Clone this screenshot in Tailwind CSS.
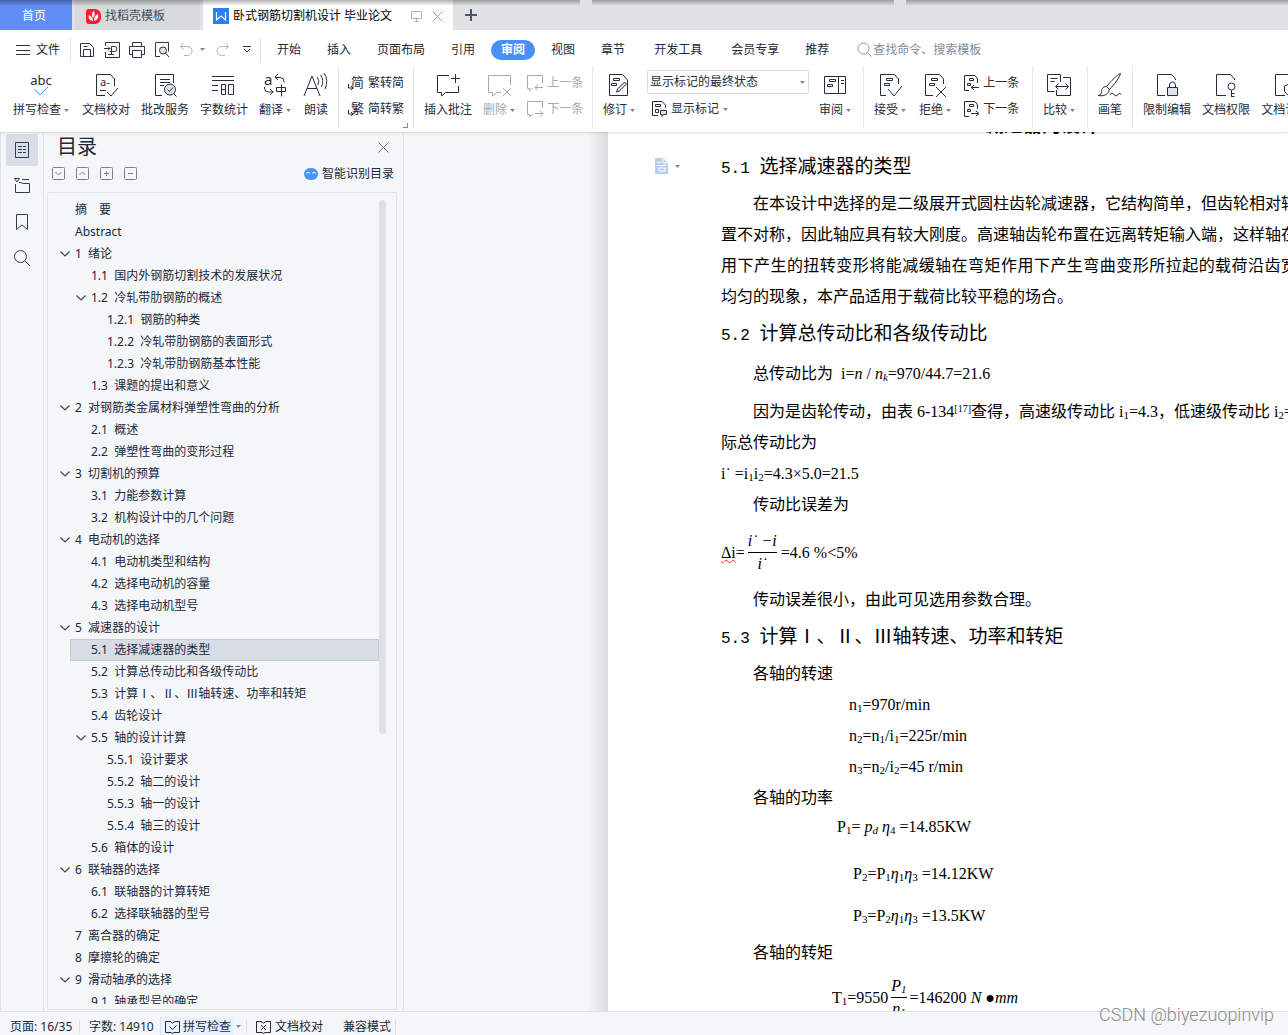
<!DOCTYPE html>
<html lang="zh-CN">
<head>
<meta charset="utf-8">
<title>卧式钢筋切割机设计 毕业论文</title>
<script src="https://cdn.jsdelivr.net/npm/@tailwindcss/browser@4"></script>
</head>
<body class="h-screen overflow-hidden flex flex-col bg-[#f5f6f8] text-xs text-[#20283a] font-['Noto_Sans','Noto_Sans_CJK_SC',sans-serif] whitespace-nowrap">
<svg class="hidden">
  <symbol id="down" viewBox="0 0 5 3"><path d="M0 0h5L2.5 3z" fill="#7d879a"/></symbol>
</svg>

<header class="relative z-10 shrink-0 bg-white shadow-sm">
  <!-- document tabs -->
  <nav class="relative flex h-[30px] bg-[#e1e2e6]">
    <a href="#" class="w-[72px] mr-[3px] flex items-center justify-center pr-1 pt-0.5 bg-[#618df6] text-white">首页</a>
    <a href="#" class="w-[125px] mr-[3px] flex items-center gap-1 pl-[11px] pt-0.5 bg-[#d8d9db] text-[#454d5c]">
      <svg class="size-[15px]" viewBox="0 0 15 15"><path d="M3 0h6a6 6 0 0 1 6 6v3a6 6 0 0 1-6 6H3a3 3 0 0 1-3-3V3a3 3 0 0 1 3-3z" fill="#f8202e"/><path d="M7 12C3 11 2 9 3 6c2 1 4 3 4 6zM7 9C5 6 6 3 8 2c1 2 1 5-1 7zM8 12c0-3 1-6 4-7 1 4-1 6-4 7z" fill="#fff"/></svg>
      找稻壳模板</a>
    <a href="#" class="w-[250px] flex items-center pl-[10px] pt-0.5 bg-white text-black">
      <svg class="size-4 mr-1" viewBox="0 0 16 16"><path fill="#2f7df0" d="M0 0h16v16H0z"/><path d="M3.500 4v8l4.500-4 4.500 4V4" fill="none" stroke="#fff" stroke-width="1.200"/></svg>
      卧式钢筋切割机设计 毕业论文
      <svg class="w-3 h-3 ml-auto mr-[9px]" viewBox="0 0 12 12" fill="none" stroke="#aab1c2"><path d="M.5 1.500h10v7H.5zM5.500 8.500v3M3 11.500h5"/></svg>
      <svg class="size-[11px] mr-[10px]" viewBox="0 0 11 11" stroke="#99a1b5"><path d="M.5.5l10 10M10.500.5l-10 10"/></svg>
    </a>
    <button class="w-9 flex items-center justify-center" aria-label="新建"><svg class="size-3" viewBox="0 0 12 12" stroke="#4a556d" stroke-width="2"><path d="M0 6h12M6 0v12"/></svg></button>
    <div class="absolute inset-x-0 top-0 flex gap-3">
      <i class="w-[580px] h-1.5 bg-linear-to-b from-black/30 to-transparent"></i>
      <i class="w-[302px] h-1.5 bg-linear-to-b from-black/30 to-transparent"></i>
      <i class="flex-1 h-1.5 bg-linear-to-b from-black/30 to-transparent"></i>
    </div>
  </nav>

  <!-- menu -->
  <div class="flex items-center h-9 pl-4 pt-[3px]">
    <button class="flex items-center gap-1.5"><svg class="w-3.5 h-3" viewBox="0 0 14 12" stroke="#2c3548"><path d="M0 1.500h14M0 6.500h14M0 10.500h14"/></svg>文件</button>
    <i class="w-px h-6 ml-[10px] mr-2 bg-[#dfe1e6]"></i>
    <div class="flex items-center gap-[9px] w-[181px] text-[#2c3548]">
      <svg class="size-4" viewBox="0 0 16 16" fill="none" stroke="currentColor"><path d="M1.500 14.500v-13h9l4 4v9zM4.500 14V7.500h7V14M4.500 4.500h4"/></svg>
      <svg class="size-4" viewBox="0 0 16 16" fill="none" stroke="currentColor"><path d="M1.500 4V.5h14v15h-14V10M0 6.500h6M4 4.500l2 2-2 2M7.500 12V4.500h3a2.500 2.500 0 0 1 0 5h-5M4 12.500h6"/></svg>
      <svg class="size-4" viewBox="0 0 16 16" fill="none" stroke="currentColor"><path d="M3.500 4.500v-4h9v4M3.500 12.500h-3v-8h15v8h-3M3.500 8.500h9v7h-9z"/></svg>
      <svg class="size-4" viewBox="0 0 16 16" fill="none" stroke="currentColor"><path d="M6 14.500H1.500V.5h13v9"/><circle cx="9" cy="8.500" r="3.500" fill="#dfe2e8"/><path d="M11.500 11l3.500 4"/></svg>
      <svg class="size-4 -mr-1" viewBox="0 0 16 16" fill="none" stroke="#a9aeba"><path d="M4.500 1L1.500 4.500l3 3M1.500 4.500h7a4.500 4.500 0 0 1 0 9H5"/></svg>
      <svg class="w-[5px] h-[3px]"><use href="#down"/></svg>
      <svg class="size-4" viewBox="0 0 16 16" fill="none" stroke="#b4b8c2"><path d="M11.500 1l3 3.500-3 3M14.500 4.500h-7a4.500 4.500 0 0 0 0 9H11"/></svg>
      <svg class="size-2 ml-1" viewBox="0 0 8 8" fill="none" stroke="currentColor"><path d="M0 .5h8M1 3l3 3 3-3"/></svg>
    </div>
    <i class="w-px h-6 mr-4 bg-[#dfe1e6]"></i>
    <nav class="flex items-center gap-[26px]">
      <a href="#">开始</a><a href="#">插入</a><a href="#">页面布局</a><a href="#">引用</a>
      <a href="#" class="-mx-[10px] px-[10px] h-5 leading-5 rounded-full bg-[#4a90f4] text-white font-bold">审阅</a>
      <a href="#">视图</a><a href="#">章节</a><a href="#" class="ml-[3px]">开发工具</a><a href="#" class="ml-[3px]">会员专享</a><a href="#">推荐</a>
    </nav>
    <label class="flex items-center gap-px ml-7">
      <svg class="size-[15px]" viewBox="0 0 15 15" fill="none" stroke="#8d95aa"><circle cx="6.500" cy="6.500" r="5.500"/><path d="M10.500 10.500l4 4"/></svg>
      <input class="w-40 h-5 outline-none placeholder:text-[#838a9b]" placeholder="查找命令、搜索模板" aria-label="查找命令">
    </label>
  </div>

  <!-- ribbon -->
  <div class="flex h-[66px] pb-1 overflow-hidden text-[#232c40] [&>div]:shrink-0 [&_button]:shrink-0 [&_svg]:shrink-0 [&_svg]:overflow-visible">
    <div class="flex gap-[11px] pl-[13px] pr-[10px] pt-1.5">
      <button class="flex flex-col items-center gap-0.5 pr-0.5"><svg class="size-7" viewBox="0 0 28 28" fill="none" stroke="#4a90f4"><text x="14" y="13" text-anchor="middle" font-size="13" fill="#232c40" stroke="none">abc</text><path d="M7.500 17l5.500 6 8-8"/></svg><span class="flex items-center gap-[3px]">拼写检查<svg class="w-[5px] h-[3px]"><use href="#down"/></svg></span></button>
      <button class="flex flex-col items-center gap-0.5"><svg class="size-7" viewBox="0 0 28 28" fill="none" stroke="currentColor"><path d="M22.500 14V7l-4-4.500h-14v21H13M8 18.500h6M15 20l4 4 7-8"/><text x="8" y="14" font-size="11" fill="currentColor" stroke="none">a-</text></svg>文档校对</button>
      <button class="flex flex-col items-center gap-0.5"><svg class="size-7" viewBox="0 0 28 28" fill="none" stroke="currentColor"><path d="M11 23.500H4.500v-21h18V11M9 7.500h10M9 10.500h10M9 13.500h4"/><circle cx="19" cy="17.500" r="5.500" fill="#dfe2e8"/><path d="M16.500 17.500l2 2 3.500-4M22.500 21.500l3 3"/></svg>批改服务</button>
      <button class="flex flex-col items-center gap-0.5"><svg class="size-7" viewBox="0 0 28 28" fill="none" stroke="currentColor"><path d="M2 4.500h22M2 8.500h22M2 13.500h6M2 18.500h6M11.500 12.500h4v10h-4zM11.500 17.500h4M18.500 12.500h5v10h-5z"/></svg>字数统计</button>
      <button class="flex flex-col items-center gap-0.5 pr-0.5"><svg class="size-7" viewBox="0 0 28 28" fill="none" stroke="currentColor"><text x="3" y="13" font-size="15" fill="currentColor" stroke="none">a</text><path d="M17 2l-3 3 3 3M14 5.500h5a4 4 0 0 1 4 4v1M3.500 15v1a4 4 0 0 0 4 4h5M9 17l3 3-3 3M15.500 15.500h9v4h-9zM20.500 12.500v12"/></svg><span class="flex items-center gap-[3px]">翻译<svg class="w-[5px] h-[3px]"><use href="#down"/></svg></span></button>
      <button class="flex flex-col items-center gap-0.5"><svg class="size-7 -mx-0.5" viewBox="0 0 28 28" fill="none" stroke="currentColor"><path d="M2 24L10 4l8 20M5 16.500h10M15 5q3 3 1 8M18.500 3q4 5 1 12M22 1q5 7 1 16"/></svg>朗读</button>
    </div>
    <div class="relative flex flex-col gap-[10px] w-[75px] pl-[9px] pt-[9px] border-l border-[#e8eaee]">
      <button class="flex items-center gap-1"><svg class="size-4" viewBox="0 0 16 16" fill="none" stroke="currentColor"><text x="3" y="12" font-size="13" fill="currentColor" stroke="none">简</text><path d="M.5 9v4h4M3 11l2 2-2 2"/></svg>繁转简</button>
      <button class="flex items-center gap-1"><svg class="size-4" viewBox="0 0 16 16" fill="none" stroke="currentColor"><text x="3" y="12" font-size="13" fill="currentColor" stroke="none">繁</text><path d="M.5 9v4h4M3 11l2 2-2 2"/></svg>简转繁</button>
      <i class="absolute right-[5px] bottom-0 size-[5px] border-r border-b border-[#7d879a]"></i>
    </div>
    <div class="flex gap-[11px] w-[179px] pl-[10px] pt-1.5 border-l border-[#e8eaee]">
      <button class="flex flex-col items-center gap-0.5"><svg class="size-7" viewBox="0 0 28 28" fill="none" stroke="currentColor"><path d="M15 3.500H3.500v17h4V24l4-3.500h13V14M17 6.500h9M21.500 2v9"/></svg>插入批注</button>
      <button class="flex flex-col items-center gap-0.5 pr-0.5 text-[#a4a8b0]"><svg class="size-7" viewBox="0 0 28 28" fill="none" stroke="currentColor"><path d="M16 20.500h-4.500L7.500 24v-3.500h-4v-17h22V13M18 16l8 8M26 16l-8 8"/></svg><span class="flex items-center gap-[3px]">删除<svg class="w-[5px] h-[3px]"><use href="#down"/></svg></span></button>
      <div class="flex flex-col gap-[10px] pt-[3px] -ml-px text-[#a4a8b0]">
        <button class="flex items-center gap-1"><svg class="size-4" viewBox="0 0 16 16" fill="none" stroke="currentColor"><path d="M15.500 8V.5H.5v13h2v2l3-2M8 12.500h8M11 9.500l-3 3 3 3"/></svg>上一条</button>
        <button class="flex items-center gap-1"><svg class="size-4" viewBox="0 0 16 16" fill="none" stroke="currentColor"><path d="M15.500 7V.5H.5v13h2v2l3-2M8 12.500h8M13 9.500l3 3-3 3"/></svg>下一条</button>
      </div>
    </div>
    <div class="flex gap-[10px] w-[271px] pl-[10px] pt-1.5 border-l border-[#e8eaee]">
      <button class="flex flex-col items-center gap-0.5 pr-0.5"><svg class="size-7" viewBox="0 0 28 28" fill="none" stroke="currentColor"><path d="M22.500 8l-5-5.500h-13v21h18zM8.500 6.500h6v2h-6zM6.500 11.500h5v2h-5z"/><path d="M11.500 20l1-3 7-7 2 2-7 7z" fill="#dfe2e8"/></svg><span class="flex items-center gap-[3px]">修订<svg class="w-[5px] h-[3px]"><use href="#down"/></svg></span></button>
      <div class="flex flex-col gap-[7px] -mt-0.5">
        <div class="relative w-[162px] flex items-center">
          <select class="appearance-none w-full h-6 pl-0.5 rounded-xs border border-[#dadde3] bg-white" aria-label="显示方式"><option>显示标记的最终状态</option></select>
          <svg class="absolute right-1 w-[5px] h-[3px]"><use href="#down"/></svg>
        </div>
        <button class="flex items-center gap-1 pl-1"><svg class="size-4" viewBox="0 0 16 16" fill="none" stroke="currentColor"><path d="M14.500 7V4L11 .5H1.500v14H7M4.500 3.500h5v2h-5zM4.500 8.500h3v3h-3z"/><path d="M9.500 9.500h6v4h-3l-1.500 2v-2H9.500z" fill="#dfe2e8"/></svg><span class="flex items-center gap-1">显示标记<svg class="w-[5px] h-[3px]"><use href="#down"/></svg></span></button>
      </div>
      <button class="flex flex-col items-center gap-0.5"><svg class="size-7" viewBox="0 0 28 28" fill="none" stroke="currentColor"><path d="M3.500 4.500h21v17h-21zM17.500 4.500v17M20 8.500h3M20 11.500h3M8.500 7.500h6v2h-6zM6.500 12.500h5v2h-5z"/></svg><span class="flex items-center gap-[3px]">审阅<svg class="w-[5px] h-[3px]"><use href="#down"/></svg></span></button>
    </div>
    <div class="flex gap-[11px] w-[169px] pl-[10px] pt-1.5 border-l border-[#e8eaee]">
      <button class="flex flex-col items-center gap-0.5 pr-0.5"><svg class="size-7" viewBox="0 0 28 28" fill="none" stroke="currentColor"><path d="M22.500 12V7l-4-4.500h-14v21H10M10.500 6.500h6v2h-6zM8.500 11.500h5v2h-5zM12 17l6 7 8-10"/></svg><span class="flex items-center gap-[3px]">接受<svg class="w-[5px] h-[3px]"><use href="#down"/></svg></span></button>
      <button class="flex flex-col items-center gap-0.5 pr-0.5"><svg class="size-7" viewBox="0 0 28 28" fill="none" stroke="currentColor"><path d="M22.500 12V7l-4-4.500h-14v21H12M10.500 6.500h6v2h-6zM8.500 11.500h5v2h-5zM15 15l10 10M25 15L15 25"/></svg><span class="flex items-center gap-[3px]">拒绝<svg class="w-[5px] h-[3px]"><use href="#down"/></svg></span></button>
      <div class="flex flex-col gap-[10px] pt-[3px]">
        <button class="flex items-center gap-[3px]"><svg class="size-4" viewBox="0 0 16 16" fill="none" stroke="currentColor"><path d="M13.500 8V4L11 .5H.5v15H5M5.500 3.500h4v2h-4zM3.500 8.500h3v2h-3zM8 12.500h7M10 10l-3 2.500 3 2.500"/></svg>上一条</button>
        <button class="flex items-center gap-[3px]"><svg class="size-4" viewBox="0 0 16 16" fill="none" stroke="currentColor"><path d="M13.500 8V4L11 .5H.5v15H5M5.500 3.500h4v2h-4zM3.500 8.500h3v2h-3zM7 12.500h7M12 10l3 2.500-3 2.500"/></svg>下一条</button>
      </div>
    </div>
    <div class="w-[55px] pl-[10px] pt-1.5 border-l border-[#e8eaee]">
      <button class="flex flex-col items-center gap-0.5"><svg class="size-7" viewBox="0 0 28 28" fill="none" stroke="currentColor"><path d="M15.500 10V2.500h-13v17h7M5.500 6.500h7M5.500 9.500h4M18 5.500h7.500v18h-14V18M11 14.500h12M13.500 11.500l-3 3 3 3M20.500 11.500l3 3-3 3"/></svg><span class="flex items-center gap-[3px]">比较<svg class="w-[5px] h-[3px]"><use href="#down"/></svg></span></button>
    </div>
    <div class="w-[45px] pl-[10px] pt-1.5 border-l border-[#e8eaee]">
      <button class="flex flex-col items-center gap-0.5"><svg class="size-7 -mx-0.5" viewBox="0 0 28 28" fill="none" stroke="currentColor"><path d="M24.500 1.500c-3 1-10 8-14 13l3 3c5-5 10-12 11-16zM10.500 14.500c-4 0-5 3-5 6q0 3-3.500 3c6 1 11-1 11-6M14 22.500q2-3 4 0t4 0 3 0"/></svg>画笔</button>
    </div>
    <div class="flex gap-[11px] pl-[10px] pt-1.5 border-l border-[#e8eaee]">
      <button class="flex flex-col items-center gap-0.5"><svg class="size-7" viewBox="0 0 28 28" fill="none" stroke="currentColor"><path d="M22.500 8V7l-4-4.500h-14v21H12M16.500 16v-3a3 3 0 0 1 6 0v3"/><path d="M14.500 15.500h10v8h-10z" fill="#dfe2e8"/></svg>限制编辑</button>
      <button class="flex flex-col items-center gap-0.5"><svg class="size-7" viewBox="0 0 28 28" fill="none" stroke="currentColor"><path d="M22.500 8V7l-4-4.500h-14v21H14M19.500 18v7M19.500 21.500h3M19.500 24.500h3"/><circle cx="19.500" cy="14.500" r="3.500"/></svg>文档权限</button>
      <button class="flex flex-col items-center gap-0.5"><svg class="size-7" viewBox="0 0 28 28" fill="none" stroke="currentColor"><path d="M22.500 8V7l-4-4.500h-14v21H14M13.500 14l5-2 5 2v5q-1 3-5 5-4-2-5-5z"/></svg>文档认证</button>
    </div>
  </div>
</header>

<main class="flex flex-1 min-h-0">
  <!-- tool strip -->
  <aside class="shrink-0 w-11 pt-0.5 flex flex-col items-center gap-1 border-x border-[#e0e2e8] text-[#2f3a55]">
    <button class="size-8 flex items-center justify-center rounded-xs bg-[#d9dde5]" aria-label="目录"><svg class="size-4" viewBox="0 0 16 16" fill="none" stroke="currentColor"><path d="M1.500.5h13v15h-13zM4 4.500h4M9 4.500h3M4 7.500h4M9 7.500h3M4 10.500h4M9 10.500h3"/></svg></button>
    <button class="size-8 flex items-center justify-center" aria-label="章节"><svg class="size-4" viewBox="0 0 16 16" fill="none" stroke="currentColor"><path d="M.5.5h5L3 4zM8 1.500h7M1.500 6v8.500h14v-9H9l-2-1H5"/></svg></button>
    <button class="size-8 flex items-center justify-center" aria-label="书签"><svg class="size-4" viewBox="0 0 16 16" fill="none" stroke="currentColor"><path d="M2.500.5h11v15L8 11l-5.500 4.500z"/></svg></button>
    <button class="size-8 flex items-center justify-center" aria-label="查找"><svg class="size-4" viewBox="0 0 16 16" fill="none" stroke="currentColor"><circle cx="6.500" cy="6.500" r="6"/><path d="M11 11l5 5"/></svg></button>
  </aside>

  <!-- outline panel -->
  <section class="shrink-0 w-[360px] pl-[3px] pr-1.5 flex flex-col border-r border-[#e0e2e8]">
    <div class="flex items-center justify-between h-[30px] pl-[10px] pr-2">
      <h2 class="text-xl">目录</h2>
      <button aria-label="关闭"><svg class="size-[11px]" viewBox="0 0 11 11" stroke="#6d7486"><path d="M.5.5l10 10M10.500.5l-10 10"/></svg></button>
    </div>
    <div class="flex items-center gap-[11px] h-[30px] pl-[5px] pr-[3px] pb-[7px]">
      <button aria-label="展开"><svg class="block size-[13px]" viewBox="0 0 13 13" fill="none" stroke="#7b8190"><rect x=".5" y=".5" width="12" height="12" rx="1"/><path d="M3.500 5l3 3 3-3"/></svg></button>
      <button aria-label="收起"><svg class="block size-[13px]" viewBox="0 0 13 13" fill="none" stroke="#7b8190"><rect x=".5" y=".5" width="12" height="12" rx="1"/><path d="M3.500 8l3-3 3 3"/></svg></button>
      <button aria-label="增加级别"><svg class="block size-[13px]" viewBox="0 0 13 13" fill="none" stroke="#7b8190"><rect x=".5" y=".5" width="12" height="12" rx="1"/><path d="M4 6.500h5M6.500 4v5"/></svg></button>
      <button aria-label="减少级别"><svg class="block size-[13px]" viewBox="0 0 13 13" fill="none" stroke="#7b8190"><rect x=".5" y=".5" width="12" height="12" rx="1"/><path d="M4 6.500h5"/></svg></button>
      <button class="flex items-center gap-1 ml-auto"><svg class="w-3.5 h-3" viewBox="0 0 14 12"><rect width="14" height="12" rx="6" fill="#4796f5"/><path d="M2.500 5.500q1.500-2.500 3 0M8.500 5.500q1.500-2.500 3 0" fill="none" stroke="#fff" stroke-width="1.200"/></svg>智能识别目录</button>
    </div>
    <div class="flex-1 min-h-0 flex mb-px pt-1.5 pb-[5px] pr-2.5 border border-[#e0e3e9] rounded-xs">
      <ul id="outline" class="flex-1 ml-2 overflow-hidden"></ul>
      <i class="w-[7px] h-[534px] mt-px rounded-full bg-[#dee0e3]"></i>
    </div>
  </section>

  <!-- document canvas -->
  <div class="flex-1 min-w-0 flex overflow-hidden">
    <div class="shrink-0 w-[204px] bg-linear-to-r from-[#f5f6f8] from-90% to-[#dcdddf]"></div>
    <article class="flex-1 min-w-0 flex pl-[47px] overflow-hidden bg-white text-black">
      <button class="shrink-0 self-start flex items-center gap-[7px] w-[66px] mt-[26px]" aria-label="段落"><svg class="w-[13px] h-4" viewBox="0 0 13 16"><path d="M0 0h8l5 5v11H0z" fill="#b9cdec"/><path d="M8 0v5h5M2 4.500h4M2 7.500h9M4 10h6v3H4z" fill="none" stroke="#fff"/></svg><svg class="w-[5px] h-[3px]"><use href="#down"/></svg></button>
      <div class="shrink-0 w-[576px] text-base leading-[31px] font-['Liberation_Serif','Noto_Sans_CJK_SC',serif] [&_h3]:text-[19px] [&_h3]:leading-[37px] [&_h3]:mt-[3px] [&_h3]:mb-[3px] [&_h3>span]:font-['Liberation_Mono',monospace] [&_h3>span]:text-base [&_p]:h-[31px] [&_sub]:text-[11px] [&_sub]:leading-none [&_sub]:bottom-[-2px]">
        <h2 class="-mt-[22px] mb-1.5 h-8 pl-[264px] text-[19px] leading-8 font-bold">减速器的设计</h2>
        <h3><span class="whitespace-pre">5.1 </span>选择减速器的类型</h3>
        <p class="pl-8 [text-align-last:justify]">在本设计中选择的是二级展开式圆柱齿轮减速器，它结构简单，但齿轮相对轴</p>
        <p class="[text-align-last:justify]">置不对称，因此轴应具有较大刚度。高速轴齿轮布置在远离转矩输入端，这样轴在</p>
        <p class="[text-align-last:justify]">用下产生的扭转变形将能减缓轴在弯矩作用下产生弯曲变形所拉起的载荷沿齿宽</p>
        <p>均匀的现象，本产品适用于载荷比较平稳的场合。</p>
        <h3><span class="whitespace-pre">5.2 </span>计算总传动比和各级传动比</h3>
        <p class="pl-8 mt-1.5 whitespace-pre">总传动比为  i=<i>n</i> / <i>n<sub>k</sub></i>=970/44.7=21.6</p>
        <p class="pl-8 mt-[7px]">因为是齿轮传动，由表 6-134<sup class="text-[10px] leading-none">[17]</sup>查得，高速级传动比 i<sub>1</sub>=4.3，低速级传动比 i<sub>2</sub>=5.0，实</p>
        <p>际总传动比为</p>
        <p>i˙ =i<sub>1</sub>i<sub>2</sub>=4.3×5.0=21.5</p>
        <p class="pl-8">传动比误差为</p>
        <div class="flex items-center h-16"><span class="underline decoration-wavy decoration-red-500 decoration-1">Δi</span>=<span class="ml-[3px] mr-1 flex flex-col text-center italic leading-[22px]"><span class="border-b border-black">i˙ −i</span><span>i˙</span></span>=4.6 %&lt;5%</div>
        <p class="pl-8">传动误差很小，由此可见选用参数合理。</p>
        <h3 class="-mt-px"><span class="whitespace-pre">5.3 </span>计算Ⅰ、Ⅱ、Ⅲ轴转速、功率和转矩</h3>
        <p class="pl-8">各轴的转速</p>
        <p class="pl-32">n<sub>1</sub>=970r/min</p>
        <p class="pl-32">n<sub>2</sub>=n<sub>1</sub>/i<sub>1</sub>=225r/min</p>
        <p class="pl-32">n<sub>3</sub>=n<sub>2</sub>/i<sub>2</sub>=45 r/min</p>
        <p class="pl-8">各轴的功率</p>
        <p class="pl-[116px] -mt-0.5">P<sub>1</sub>= <i>p<sub>d</sub></i> <i>η</i><sub>4</sub> =14.85KW</p>
        <p class="pl-[132px] mt-4">P<sub>2</sub>=P<sub>1</sub><i>η</i><sub>1</sub><i>η</i><sub>3</sub> =14.12KW</p>
        <p class="pl-[132px] mt-[11px]">P<sub>3</sub>=P<sub>2</sub><i>η</i><sub>1</sub><i>η</i><sub>3</sub> =13.5KW</p>
        <p class="pl-8 mt-1.5">各轴的转矩</p>
        <div class="flex items-center h-[58px] pl-[111px]"><span>T<sub>1</sub>=9550</span><span class="mx-[3px] flex flex-col text-center italic leading-[22px]"><span class="border-b border-black">P<sub>1</sub></span><span>n<sub>1</sub></span></span>=146200&nbsp;<i>N</i>&nbsp;●<i>mm</i></div>
      </div>
    </article>
  </div>
</main>

<footer class="relative shrink-0 flex items-center h-6 pl-[10px] pt-1.5 border-t border-[#dfe1e6] bg-[#f5f6f8]">
  <span class="w-[69px]">页面: 16/35</span>
  <i class="w-px h-3.5 mr-[9px] bg-[#dcdfe5]"></i>
  <span class="w-[71px]">字数: 14910</span>
  <button class="flex items-center gap-[3px] h-5 w-[74px] pl-1 border-l border-[#dcdfe5] bg-[#e8f1fd]"><svg class="w-[15px] h-3.5" viewBox="0 0 15 14" fill="none" stroke="currentColor"><path d="M5 1.500H.5v11H6l1.500 1 1.500-1h5.500v-11H10L7.500 3zM4.500 6.500l3 3 4-4"/></svg>拼写检查</button>
  <svg class="w-[5px] h-[3px] ml-0.5 mr-[5px]"><use href="#down"/></svg>
  <i class="w-px h-3.5 mr-[9px] bg-[#dcdfe5]"></i>
  <button class="flex items-center gap-1"><svg class="w-[15px] h-3.5" viewBox="0 0 15 14" fill="none" stroke="currentColor"><path d="M5 1.500H.5v11H6l1.500 1 1.500-1h5.500v-11H10L7.500 3zM5 5l5 5M10 5l-5 5"/></svg>文档校对</button>
  <span class="ml-5 pr-1 border-r border-[#dcdfe5]">兼容模式</span>
  <span class="absolute right-[14px] bottom-1.5 text-lg leading-7 text-[#8b8d91] font-light font-['Roboto',sans-serif]">CSDN @biyezuopinvip</span>
</footer>

<script>
  // [level, has children, title]
  const items = [
    [0,0,"摘　要"],[0,0,"Abstract"],[0,1,"1  绪论"],[1,0,"1.1  国内外钢筋切割技术的发展状况"],[1,1,"1.2  冷轧带肋钢筋的概述"],
    [2,0,"1.2.1  钢筋的种类"],[2,0,"1.2.2  冷轧带肋钢筋的表面形式"],[2,0,"1.2.3  冷轧带肋钢筋基本性能"],[1,0,"1.3  课题的提出和意义"],
    [0,1,"2  对钢筋类金属材料弹塑性弯曲的分析"],[1,0,"2.1  概述"],[1,0,"2.2  弹塑性弯曲的变形过程"],
    [0,1,"3  切割机的预算"],[1,0,"3.1  力能参数计算"],[1,0,"3.2  机构设计中的几个问题"],
    [0,1,"4  电动机的选择"],[1,0,"4.1  电动机类型和结构"],[1,0,"4.2  选择电动机的容量"],[1,0,"4.3  选择电动机型号"],
    [0,1,"5  减速器的设计"],[1,0,"5.1  选择减速器的类型"],[1,0,"5.2  计算总传动比和各级传动比"],[1,0,"5.3  计算Ⅰ、Ⅱ、Ⅲ轴转速、功率和转矩"],[1,0,"5.4  齿轮设计"],
    [1,1,"5.5  轴的设计计算"],[2,0,"5.5.1  设计要求"],[2,0,"5.5.2  轴二的设计"],[2,0,"5.5.3  轴一的设计"],[2,0,"5.5.4  轴三的设计"],[1,0,"5.6  箱体的设计"],
    [0,1,"6  联轴器的选择"],[1,0,"6.1  联轴器的计算转矩"],[1,0,"6.2  选择联轴器的型号"],[0,0,"7  离合器的确定"],[0,0,"8  摩擦轮的确定"],
    [0,1,"9  滑动轴承的选择"],[1,0,"9.1  轴承型号的确定"]
  ];
  const list = document.getElementById("outline");
  for (const [level, open, title] of items) {
    const li = document.createElement("li");
    const current = title.startsWith("5.1 ");
    li.className = current
      ? "relative flex items-center h-[22px] ml-[14px] whitespace-pre outline-1 -outline-offset-1 outline-[#c5cad4] bg-[#d8dce4]"
      : "relative flex items-center h-[22px] ml-[14px] whitespace-pre";
    li.style.paddingLeft = 5 + level * 16 + "px";
    li.innerHTML = (open ? '<svg class="absolute w-[10px] h-1.5 -translate-x-[15px]" viewBox="0 0 10 6" fill="none" stroke="#3a4358" stroke-width="1.200"><path d="M.5.5L5 5 9.500.5"/></svg>' : "") + '<a href="#">' + title + "</a>";
    list.append(li);
  }
</script>
</body>
</html>
